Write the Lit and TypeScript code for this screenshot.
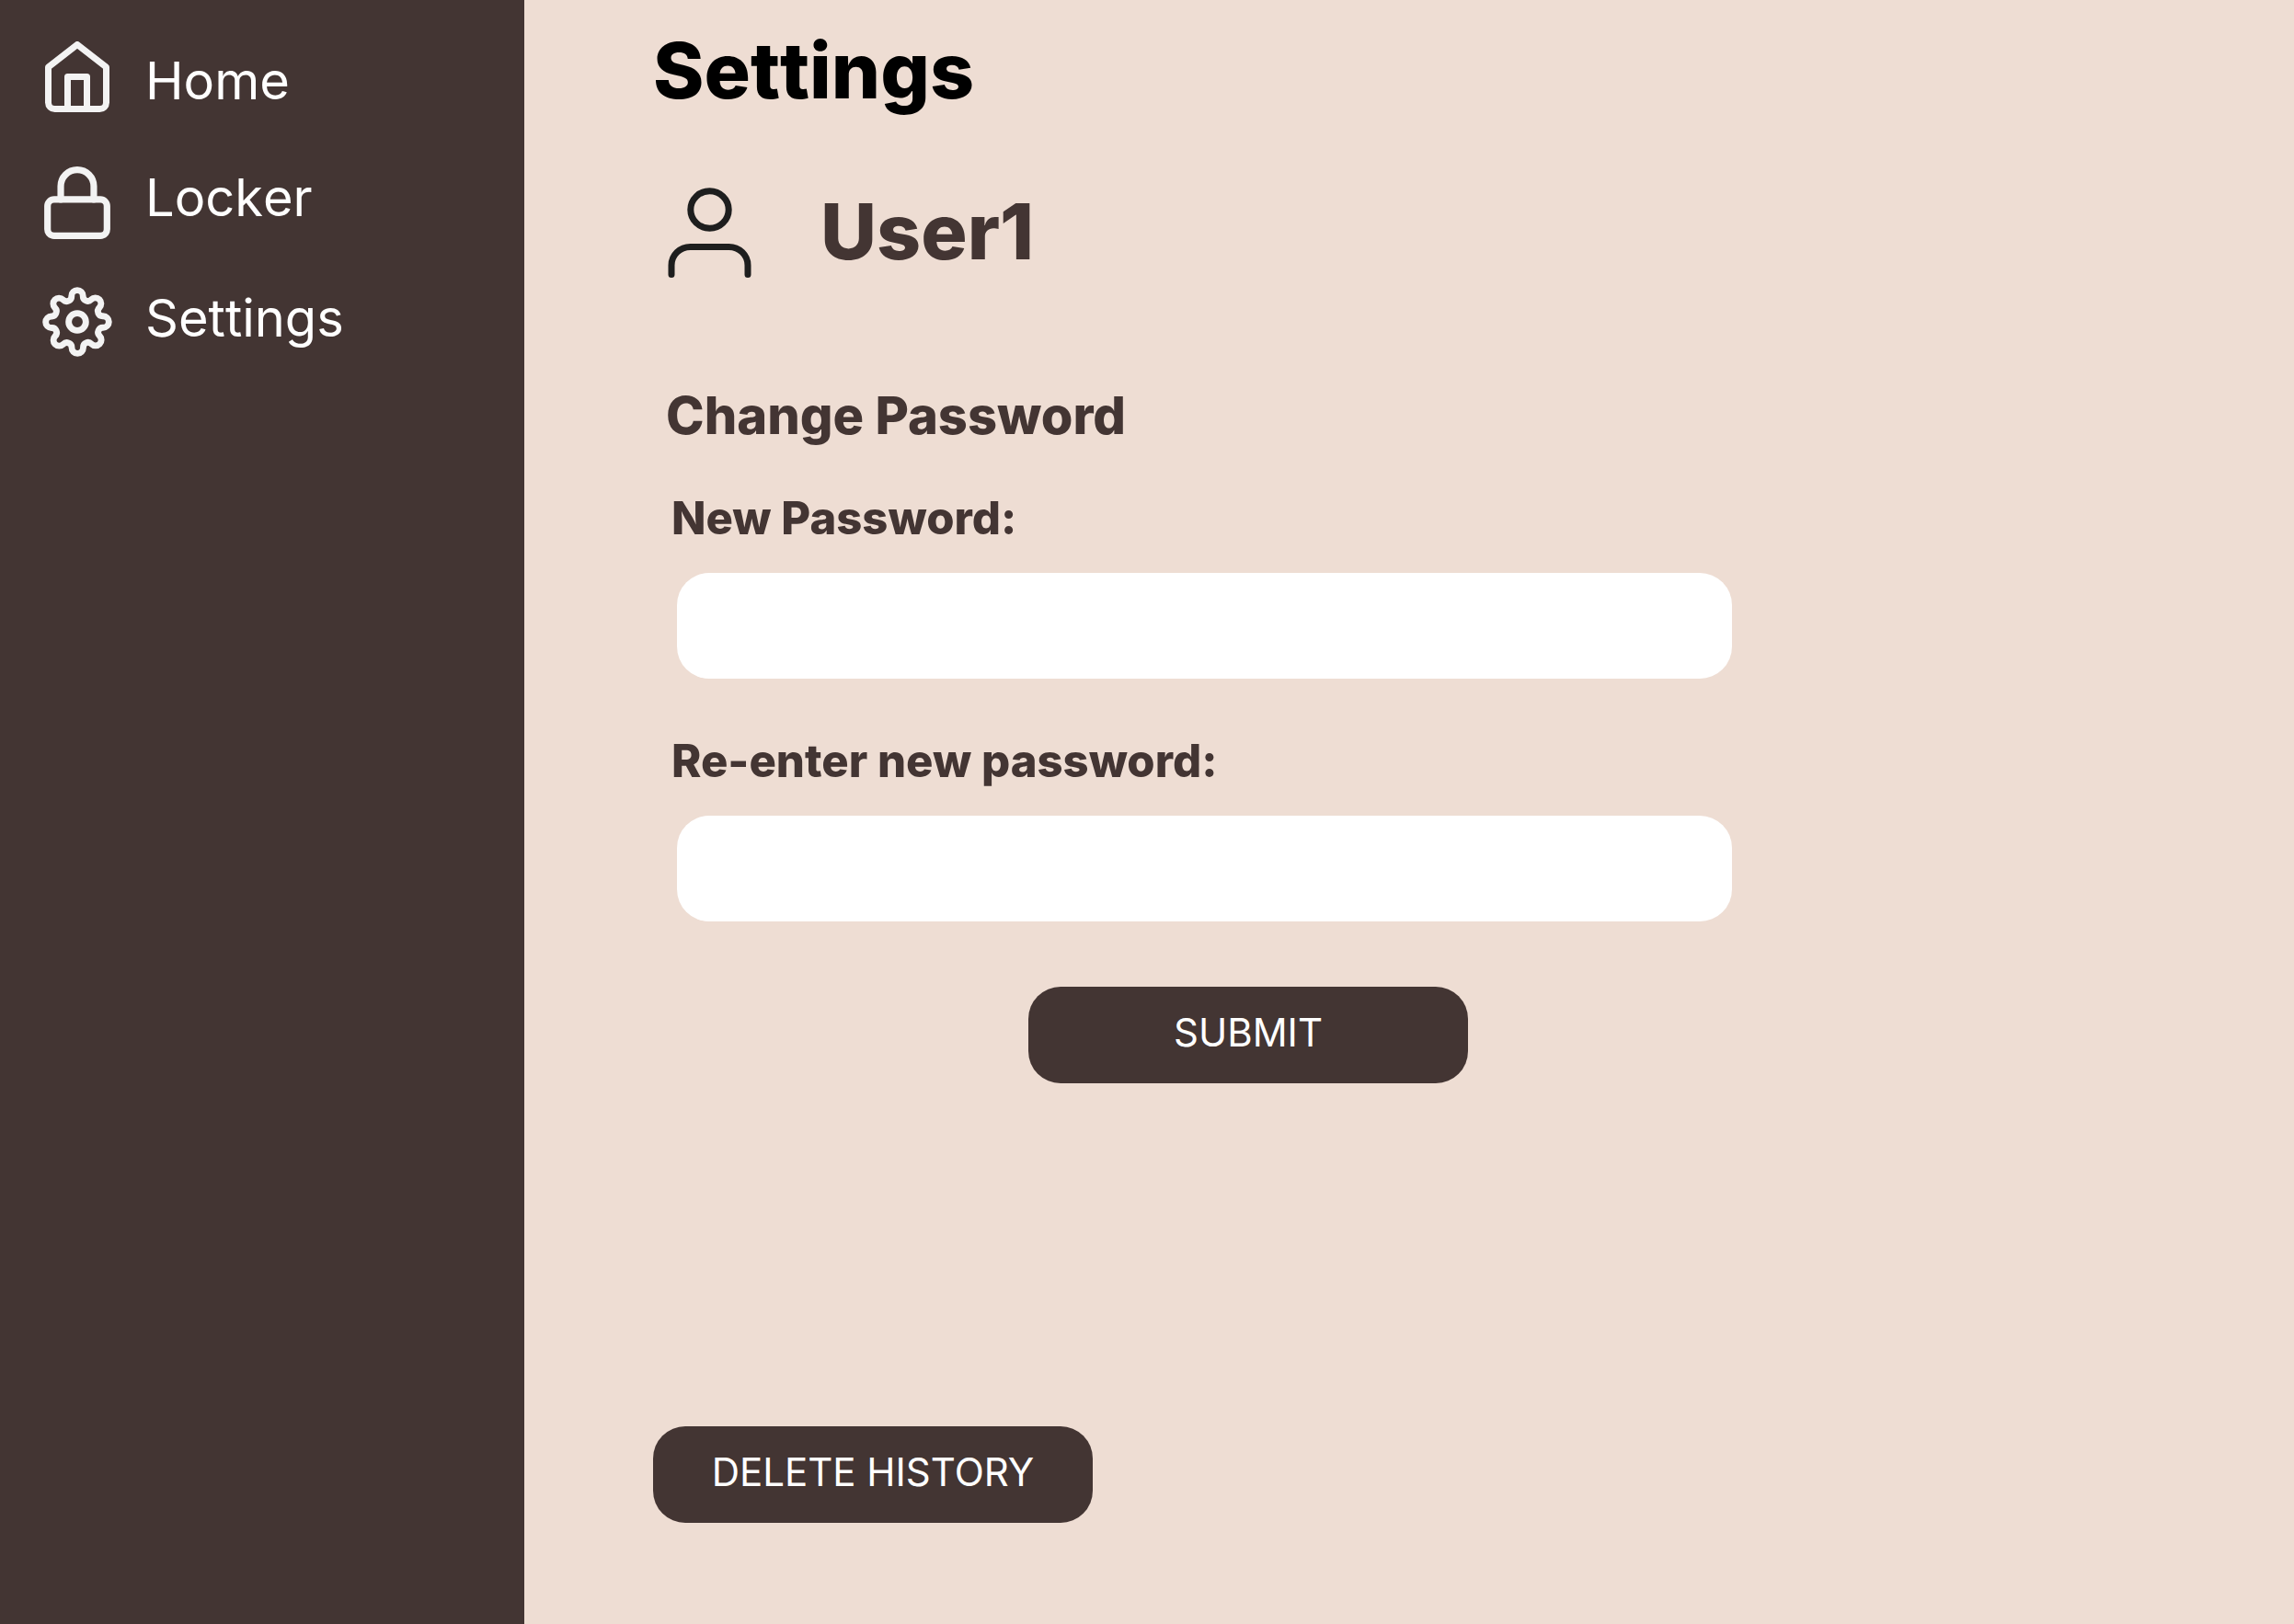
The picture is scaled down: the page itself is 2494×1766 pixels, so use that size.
import { LitElement, html, css, svg } from "lit";
import { customElement } from "lit/decorators.js";

const homeIcon = svg`<svg class="icon" width="70" height="77" viewBox="2 1 20 22" aria-hidden="true">
  <path d="M3 9l9-7 9 7v11a2 2 0 0 1-2 2H5a2 2 0 0 1-2-2z"/><path d="M9 22V12h6v10"/></svg>`;

const lockIcon = svg`<svg class="icon" width="72" height="79" viewBox="2 1 20 22" aria-hidden="true">
  <rect x="3" y="11" width="18" height="11" rx="2"/><path d="M7 11V7a5 5 0 0 1 10 0v4"/></svg>`;

const gearIcon = svg`<svg class="icon gear" width="76" height="76" viewBox="-0.18 -0.18 24.36 24.36" aria-hidden="true">
  <circle cx="12" cy="12" r="3"/>
  <path d="M19.4 15a1.65 1.65 0 0 0 .33 1.82l.06.06a2 2 0 0 1 0 2.83 2 2 0 0 1-2.83 0l-.06-.06a1.65 1.65 0 0 0-1.82-.33 1.65 1.65 0 0 0-1 1.51V21a2 2 0 0 1-2 2 2 2 0 0 1-2-2v-.09A1.65 1.65 0 0 0 9 19.4a1.65 1.65 0 0 0-1.82.33l-.06.06a2 2 0 0 1-2.83 0 2 2 0 0 1 0-2.83l.06-.06a1.65 1.65 0 0 0 .33-1.82 1.65 1.65 0 0 0-1.51-1H3a2 2 0 0 1-2-2 2 2 0 0 1 2-2h.09A1.65 1.65 0 0 0 4.6 9a1.65 1.65 0 0 0-.33-1.82l-.06-.06a2 2 0 0 1 0-2.83 2 2 0 0 1 2.83 0l.06.06a1.65 1.65 0 0 0 1.82.33H9a1.65 1.65 0 0 0 1-1.51V3a2 2 0 0 1 2-2 2 2 0 0 1 2 2v.09a1.65 1.65 0 0 0 1 1.51 1.65 1.65 0 0 0 1.82-.33l.06-.06a2 2 0 0 1 2.83 0 2 2 0 0 1 0 2.83l-.06.06a1.65 1.65 0 0 0-.33 1.82V9a1.65 1.65 0 0 0 1.51 1H21a2 2 0 0 1 2 2 2 2 0 0 1-2 2h-.09a1.65 1.65 0 0 0-1.51 1z"/></svg>`;

@customElement("app-root")
export class AppRoot extends LitElement {
  static styles = css`
    :host {
      display: flex;
      min-height: 100vh;
      background: #eeddd3;
      color: #433533;
      font-family: Inter, "Liberation Sans", sans-serif;
    }
    * { box-sizing: border-box; }
    .sidebar {
      flex: none;
      width: 570px;
      padding: 45px 40px;
      background: #433533;
    }
    .menu {
      display: flex;
      flex-direction: column;
      gap: 52px;
      margin: 0;
      padding: 0;
      list-style: none;
    }
    .link {
      display: grid;
      grid-template-columns: 88px 1fr;
      column-gap: 30px;
      align-items: start;
      color: #fff;
      font-size: 56px;
      line-height: 68px;
      font-kerning: none;
      text-decoration: none;
    }
    .lead {
      align-items: end;
      padding-bottom: 7px;
    }
    .icon {
      display: block;
      justify-self: center;
      fill: none;
      stroke: #f3f3f3;
      stroke-width: 2;
      stroke-linecap: round;
      stroke-linejoin: round;
    }
    .gear { stroke-width: 2.2; }
    .main {
      flex: 1;
      min-width: 0;
      padding: 26px 140px;
    }
    .title, .name {
      margin: 0;
      font-size: 84px;
      line-height: 102px;
      font-weight: 800;
    }
    .title {
      color: #000;
      font-kerning: none;
    }
    .user {
      display: flex;
      align-items: center;
      gap: 72px;
      margin-top: 72px;
      padding-left: 14px;
    }
    .avatar {
      display: block;
      fill: none;
      stroke: #1e1e1e;
      stroke-width: 7;
      stroke-linecap: round;
      stroke-linejoin: round;
    }
    .form {
      max-width: 1173px;
      margin-top: 114px;
      padding-left: 14px;
    }
    .heading {
      margin: 0 0 48px;
      font-size: 56px;
      line-height: 68px;
      font-weight: 800;
    }
    .fields {
      display: grid;
      gap: 60px;
      padding-left: 6px;
    }
    .label {
      display: block;
      font-size: 49px;
      line-height: 60px;
      font-weight: 800;
    }
    .input {
      display: block;
      width: calc(100% - 6px);
      height: 115px;
      margin: 29px 0 0 6px;
      padding: 0 32px;
      border: 0;
      border-radius: 35px;
      background: #fff;
      color: inherit;
      font: inherit;
      font-size: 42px;
    }
    .button {
      display: block;
      width: 478px;
      height: 105px;
      padding: 0 0 6px;
      border: 0;
      border-radius: 35px;
      background: #433533;
      color: #fff;
      font: inherit;
      font-size: 42px;
      line-height: 52px;
    }
    .submit { margin: 71px 0 0 394px; }
    .delete { margin-top: 373px; }
  `;

  render() {
    return html`
      <nav class="sidebar" aria-label="Main">
        <ul class="menu">
          <li><a class="link lead" href="#home">${homeIcon}<span>Home</span></a></li>
          <li><a class="link" href="#locker">${lockIcon}<span>Locker</span></a></li>
          <li><a class="link" href="#settings" aria-current="page">${gearIcon}<span>Settings</span></a></li>
        </ul>
      </nav>
      <main class="main">
        <h1 class="title">Settings</h1>
        <section class="user">
          <svg class="avatar" width="96" height="104" viewBox="0 0 96 104" aria-hidden="true">
            <ellipse cx="47.500" cy="28" rx="20.700" ry="20.300"/>
            <path d="M6 98.500V88.500a20.500 20 0 0 1 20.500-20h42a20.500 20 0 0 1 20.500 20v10"/>
          </svg>
          <h2 class="name">User1</h2>
        </section>
        <form class="form" @submit=${(e: Event) => e.preventDefault()}>
          <h2 class="heading">Change Password</h2>
          <div class="fields">
            <div>
              <label class="label" for="new-password">New Password:</label>
              <input class="input" id="new-password" type="password" autocomplete="new-password" />
            </div>
            <div>
              <label class="label" for="repeat-password">Re-enter new password:</label>
              <input class="input" id="repeat-password" type="password" autocomplete="new-password" />
            </div>
          </div>
          <button class="button submit" type="submit">SUBMIT</button>
        </form>
        <button class="button delete" type="button">DELETE HISTORY</button>
      </main>
    `;
  }
}
